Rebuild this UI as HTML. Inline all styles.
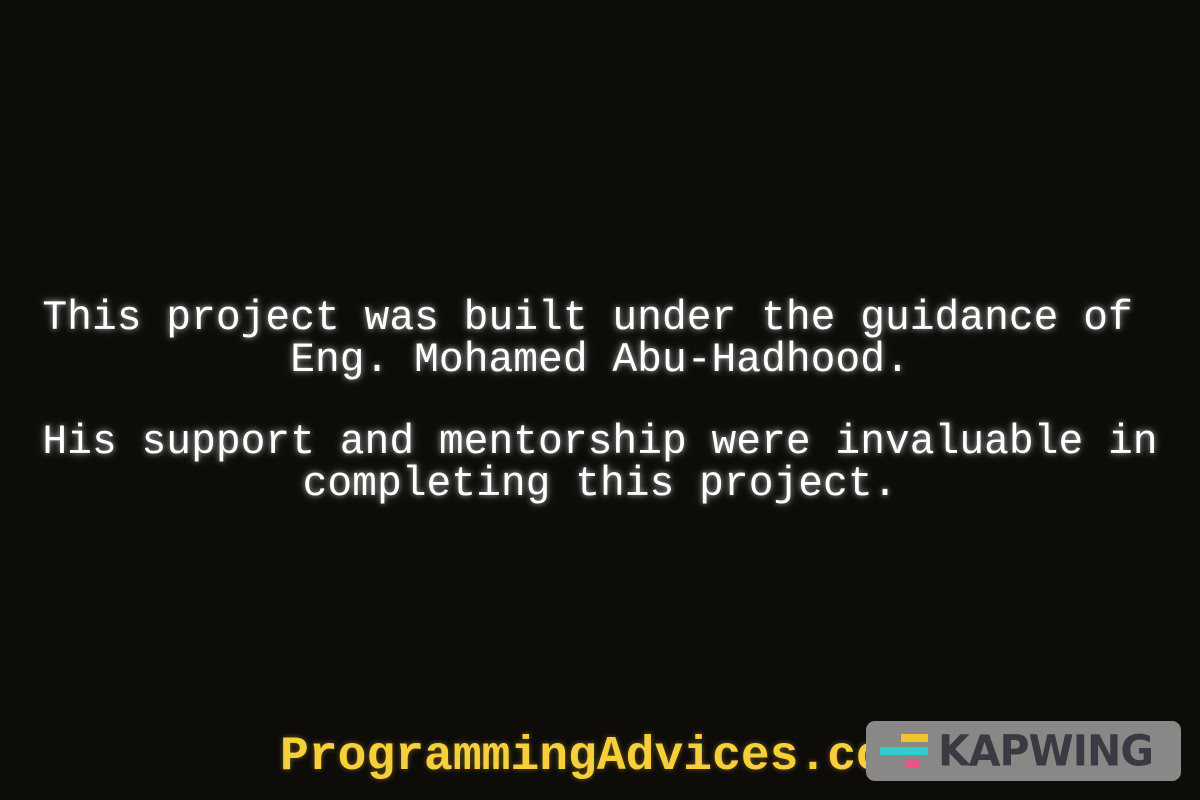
<!DOCTYPE html>
<html><head><meta charset="utf-8"><style>
html,body{margin:0;padding:0;background:#0e0c09;width:1200px;height:800px;overflow:hidden}
.t{position:absolute;left:0;width:1200px;text-align:center;white-space:pre;font-family:"Liberation Mono",monospace;font-size:41.3px;color:#fff;text-shadow:0 0 6px rgba(255,255,255,.6),0 0 12px rgba(255,255,255,.25);line-height:42px}
.f{position:absolute;left:280px;top:730px;font-family:"Liberation Mono",monospace;font-weight:bold;font-size:48px;color:#f7cf3a;white-space:pre;text-shadow:0 0 6px rgba(247,207,58,.4)}
.k{position:absolute;left:866px;top:721px;width:315px;height:60px;background:#8a8886;border-radius:9px}
.kt{position:absolute;left:938px;top:727px;font-family:"DejaVu Sans","Liberation Sans",sans-serif;font-weight:bold;font-size:41px;color:#3a3a42;letter-spacing:-1px;transform:scaleY(1.05)}
</style></head><body>
<div class="t" style="top:298px">This project was built under the guidance of </div>
<div class="t" style="top:340px">Eng. Mohamed Abu-Hadhood.</div>
<div class="t" style="top:422px">His support and mentorship were invaluable in</div>
<div class="t" style="top:464px">completing this project.</div>
<div class="f">ProgrammingAdvices.com</div>
<div class="k"></div>
<div style="position:absolute;left:901px;top:734px;width:27px;height:8px;background:#f2c530"></div>
<div style="position:absolute;left:880px;top:747px;width:48px;height:8px;background:#2fd0cc"></div>
<div style="position:absolute;left:906px;top:759px;width:13px;height:8px;background:#e8558a"></div>
<div class="kt">KAPWING</div>
</body></html>
